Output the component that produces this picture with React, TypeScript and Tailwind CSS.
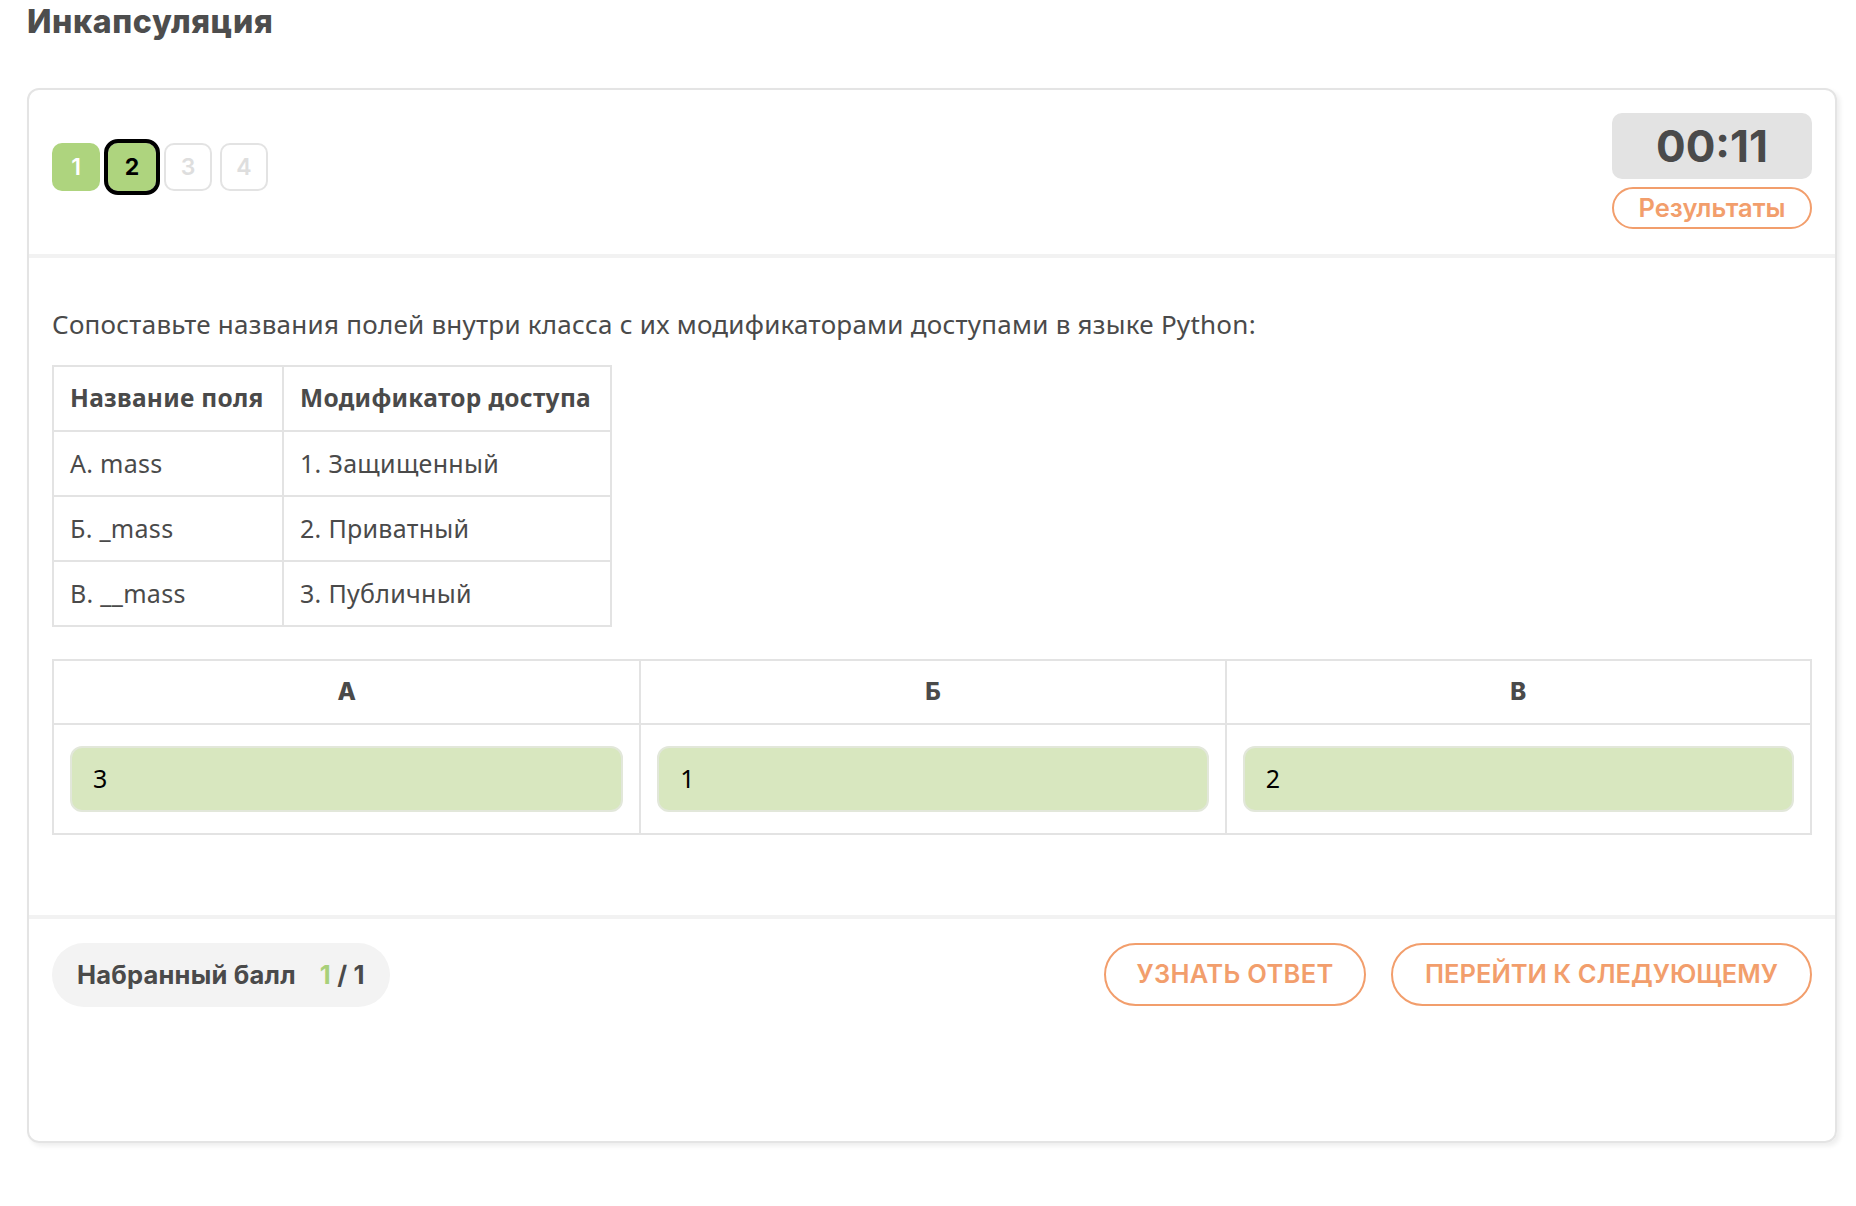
import React from 'react';

const steps = [
  { n: 1, state: 'done' },
  { n: 2, state: 'current' },
  { n: 3, state: 'todo' },
  { n: 4, state: 'todo' },
];

const fields = [
  ['А. mass', '1. Защищенный'],
  ['Б. _mass', '2. Приватный'],
  ['В. __mass', '3. Публичный'],
];

const answers = [
  { key: 'А', value: '3' },
  { key: 'Б', value: '1' },
  { key: 'В', value: '2' },
];

const head = { fontFamily: 'Inter, "Noto Sans", sans-serif' };
const body = { fontFamily: '"Noto Sans", Inter, sans-serif' };

export default function App() {
  return (
    <div className="w-[1856px] h-[1206px] bg-white text-[#4a4a4a]">
      <h1 className="pl-[27px] text-[32px] font-extrabold leading-[44px] tracking-[0.6px] text-[#4d4d4d]" style={head}>
        Инкапсуляция
      </h1>

      <div className="mt-[44px] ml-[27px] w-[1810px] h-[1055px] flex flex-col rounded-[12px] border-2 border-[#e4e4e4] shadow-[3px_3px_5px_rgba(0,0,0,0.07)]">
        {/* header */}
        <div className="flex justify-between items-start px-[23px] pt-[23px] pb-[25px] border-b-4 border-[#f2f2f2]" style={head}>
          <div className="flex gap-2 mt-[30px]">
            {steps.map((s) => (
              <div
                key={s.n}
                className={
                  s.state === 'done'
                    ? 'w-12 h-12 rounded-[10px] bg-[#aed47e] text-white flex items-center justify-center text-[23px] font-semibold'
                    : s.state === 'current'
                    ? 'w-12 h-12 rounded-[10px] bg-[#aed47e] text-black outline-4 outline-black flex items-center justify-center text-[23px] font-bold'
                    : 'w-12 h-12 rounded-[10px] border-2 border-[#e3e3e3] text-[#dedede] flex items-center justify-center text-[23px] font-semibold'
                }
              >
                {s.n}
              </div>
            ))}
          </div>
          <div className="flex flex-col gap-2">
            <div className="w-[200px] h-[66px] rounded-[10px] bg-[#e3e3e3] flex items-center justify-center text-[44px] font-bold text-[#4a4a4a]">
              00:11
            </div>
            <button className="w-[200px] h-[42px] rounded-full border-2 border-[#f29e6c] text-[#f29e6c] text-[25.5px] font-semibold leading-none">
              Результаты
            </button>
          </div>
        </div>

        {/* body */}
        <div className="px-[23px] pt-[49px] pb-[80px] border-b-4 border-[#f2f2f2]" style={body}>
          <p className="text-[26px] leading-[34px] tracking-[0.25px]">
            Сопоставьте названия полей внутри класса с их модификаторами доступами в языке Python:
          </p>

          <table className="mt-[24px] border-collapse text-[25px] tracking-[0.3px] whitespace-nowrap">
            <tbody>
              <tr className="h-[65px] text-[24.5px]">
                <td className="w-[230px] border-2 border-[#e3e3e3] px-[16px] font-bold">Название поля</td>
                <td className="w-[328px] border-2 border-[#e3e3e3] px-[16px] font-bold">Модификатор доступа</td>
              </tr>
              {fields.map(([a, b]) => (
                <tr key={a} className="h-[65px]">
                  <td className="border-2 border-[#e3e3e3] px-[16px]">{a}</td>
                  <td className="border-2 border-[#e3e3e3] px-[16px]">{b}</td>
                </tr>
              ))}
            </tbody>
          </table>

          <div className="mt-[32px] grid grid-cols-3 border-2 border-[#e3e3e3]">
            {answers.map((a, i) => (
              <div key={a.key} className={i > 0 ? 'border-l-2 border-[#e3e3e3]' : ''}>
                <div className="h-[64px] border-b-2 border-[#e3e3e3] flex items-center justify-center text-[24px] font-extrabold" style={head}>
                  {a.key}
                </div>
                <div className="px-[16px] py-[21px]">
                  <div className="h-[66px] rounded-[12px] border-2 border-[#e2e7da] bg-[#d8e7bf] flex items-center px-[21px] text-[25px] text-black">
                    {a.value}
                  </div>
                </div>
              </div>
            ))}
          </div>
        </div>

        {/* footer */}
        <div className="flex-1 flex justify-between items-start px-[23px] pt-[24px]" style={head}>
          <div className="h-[64px] rounded-full bg-[#f3f3f3] flex items-center gap-[24px] px-[25px] text-[25.5px] font-bold tracking-[0.2px] text-[#4a4a4a]">
            <span>Набранный балл</span>
            <span>
              <span className="text-[#a8d07a]">1</span> / 1
            </span>
          </div>
          <div className="flex gap-[25px]">
            <button className="w-[262px] h-[63px] rounded-full border-2 border-[#f29e6c] text-[#f29e6c] text-[25.5px] font-semibold uppercase tracking-[0.3px]">
              Узнать ответ
            </button>
            <button className="w-[421px] h-[63px] rounded-full border-2 border-[#f29e6c] text-[#f29e6c] text-[25.5px] font-semibold uppercase">
              Перейти к следующему
            </button>
          </div>
        </div>
      </div>
    </div>
  );
}
